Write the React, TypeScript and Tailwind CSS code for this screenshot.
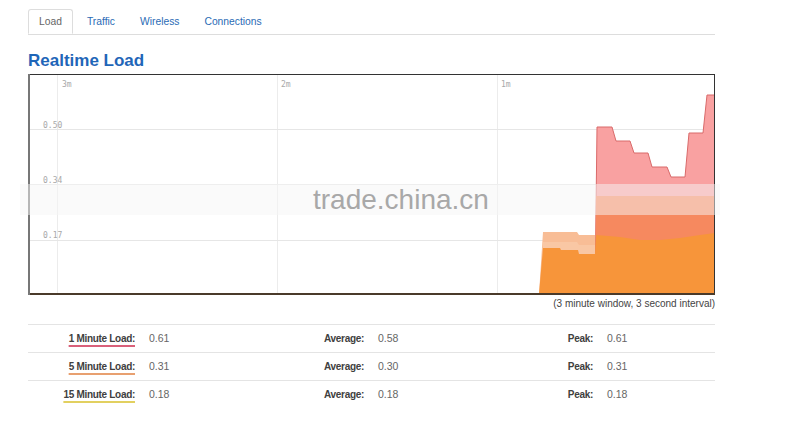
import React from "react";

const rows = [
  { label: "1 Minute Load:", cur: "0.61", avg: "0.58", peak: "0.61", line: "decoration-[#d9607a]" },
  { label: "5 Minute Load:", cur: "0.31", avg: "0.30", peak: "0.31", line: "decoration-[#e8a070]" },
  { label: "15 Minute Load:", cur: "0.18", avg: "0.18", peak: "0.18", line: "decoration-[#e2d060]" },
];

function Chart() {
  return (
    <svg width={687} height={221} viewBox="28 74 687 221" className="block">
      <rect x={28} y={74} width={687} height={221} fill="#fff" />
      {[57, 277, 497].map((x) => (
        <line key={x} x1={x + 0.5} y1={75} x2={x + 0.5} y2={294} stroke="#ececec" strokeWidth={1} />
      ))}
      {[129, 184, 240].map((y) => (
        <line key={y} x1={29} y1={y + 0.5} x2={714} y2={y + 0.5} stroke="#e6e6e6" strokeWidth={1} />
      ))}
      <g fontFamily="'DejaVu Sans Mono', monospace" fontSize={8} fill="#a8a8a8">
        <text x={62} y={87}>3m</text>
        <text x={281} y={87}>2m</text>
        <text x={501} y={87}>1m</text>
        <text x={43} y={128}>0.50</text>
        <text x={43} y={183}>0.34</text>
        <text x={43} y={238}>0.17</text>
      </g>
      <polygon points="539,294 543,232 577,232 579,235 595,235 595,294" fill="#f8bd96" />
      <polygon points="541,294 543,242 577,242 579,245 595,245 595,294" fill="#f9c7a4" />
      <polygon
        points="595,294 597,127 612,127 616,141 630,141 634,153 648,153 652,167 667,167 671,177 685,177 689,133 703,133 707,95 715,95 715,294"
        fill="#f9a1a1"
      />
      <polyline
        points="595,294 597,127 612,127 616,141 630,141 634,153 648,153 652,167 667,167 671,177 685,177 689,133 703,133 707,95 715,95"
        fill="none"
        stroke="#d96a6a"
        strokeWidth={1}
      />
      <polygon points="595,294 596,196 715,196 715,294" fill="#f6895f" />
      <polygon
        points="539,294 543,248 560,248 561,250 578,250 579,254 595,254 596,235 620,237 640,240 660,240 680,238 700,235 715,233 715,294"
        fill="#f7953a"
      />
      <line x1={28} y1={74.5} x2={715} y2={74.5} stroke="#333" strokeWidth={1} />
      <line x1={714.5} y1={74} x2={714.5} y2={295} stroke="#333" strokeWidth={1} />
      <line x1={28} y1={294} x2={715} y2={294} stroke="#4a3a2a" strokeWidth={2} />
      <line x1={29} y1={74} x2={29} y2={295} stroke="#777" strokeWidth={2} />
    </svg>
  );
}

export default function App() {
  return (
    <div
      className="relative w-[800px] h-[421px] bg-white overflow-hidden"
      style={{ fontFamily: "'Liberation Sans', Arial, sans-serif" }}
    >
      <div className="pt-[9px] px-[28px]">
        <div className="flex border-b border-[#dddddd] w-[687px] text-[10.3px]">
          <div className="h-[25px] px-[10px] flex items-center border border-[#dddddd] border-b-white -mb-px rounded-t-[3px] text-[#666] bg-white mr-[3px]">
            Load
          </div>
          <div className="h-[25px] px-[11px] flex items-center text-[#2a6bb5] mr-[3px]">Traffic</div>
          <div className="h-[25px] px-[11px] flex items-center text-[#2a6bb5] mr-[3px]">Wireless</div>
          <div className="h-[25px] px-[11px] flex items-center text-[#2a6bb5]">Connections</div>
        </div>

        <h2 className="mt-[15px] text-[17px] leading-[22px] font-bold text-[#1f66b8]">Realtime Load</h2>

        <div className="mt-[2px]">
          <Chart />
        </div>

        <div className="w-[687px] text-right text-[10px] text-[#444] mt-[2px] leading-[13px]">
          (3 minute window, 3 second interval)
        </div>

        <div className="mt-[14px] w-[687px] text-[10.5px] leading-[13px]">
          {rows.map((r) => (
            <div
              key={r.label}
              className="grid grid-cols-[114px_115px_114px_115px_114px_115px] items-center h-[28px] border-t border-[#e4e4e4]"
            >
              <div className="text-right pr-[7px]">
                <span
                  className={`font-bold text-[10px] tracking-[-0.3px] text-[#404040] underline decoration-2 underline-offset-[3px] ${r.line}`}
                >
                  {r.label}
                </span>
              </div>
              <div className="pl-[7px] text-[#666]">{r.cur}</div>
              <div className="text-right pr-[7px] font-bold text-[10px] tracking-[-0.3px] text-[#404040]">Average:</div>
              <div className="pl-[7px] text-[#666]">{r.avg}</div>
              <div className="text-right pr-[7px] font-bold text-[10px] tracking-[-0.3px] text-[#404040]">Peak:</div>
              <div className="pl-[7px] text-[#666]">{r.peak}</div>
            </div>
          ))}
        </div>
      </div>

      <div className="absolute left-[20px] top-[184px] w-[700px] h-[31px] bg-[#f6f6f6]/50 flex items-center pl-[293px]">
        <span className="text-[28px] text-[#a8a8a8] leading-none">trade.china.cn</span>
      </div>
    </div>
  );
}
